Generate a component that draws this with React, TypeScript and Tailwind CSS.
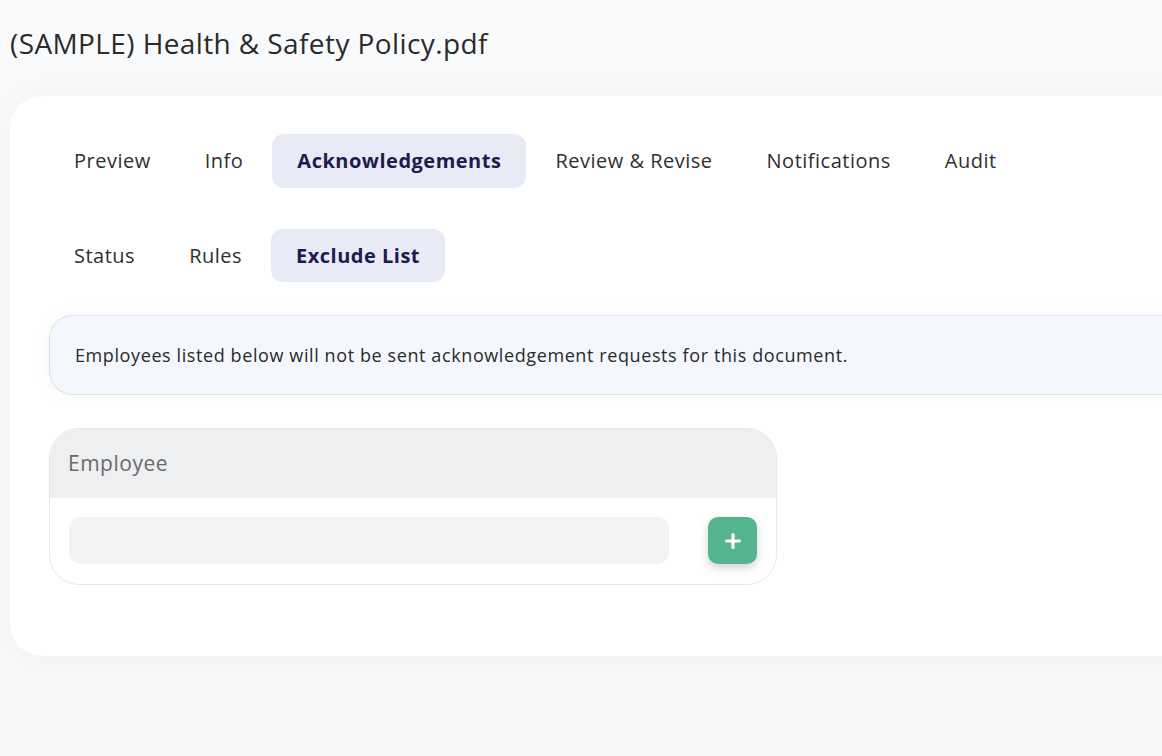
import { Plus } from 'lucide-react';

const mainTabs = ['Preview', 'Info', 'Acknowledgements', 'Review & Revise', 'Notifications', 'Audit'];
const subTabs = ['Status', 'Rules', 'Exclude List'];

const TabRow = ({ tabs, active, height }: { tabs: string[]; active: string; height: string }) => (
    <div className="flex items-center gap-1">
        {tabs.map(tab => (
            <button
                key={tab}
                type="button"
                className={`${height} px-[25px] rounded-[12px] text-[20px] tracking-[0.5px] whitespace-nowrap ${
                    tab === active ? 'bg-[#e8eaf6] text-[#1f1b4e] font-bold' : 'text-[#2f2f2f]'
                }`}
            >
                {tab}
            </button>
        ))}
    </div>
);

export default function App() {
    return (
        <div
            className="min-h-screen w-full overflow-hidden bg-gradient-to-b from-[#f9fafb] to-[#f7f8fa] pl-[10px] pt-[24px]"
            style={{ fontFamily: '"Open Sans", "Noto Sans", sans-serif' }}
        >
            <h1 className="text-[28px] leading-[38px] tracking-[0.4px] text-[#2b2b2b]">(SAMPLE) Health &amp; Safety Policy.pdf</h1>

            <div className="mt-[34px] w-[1200px] rounded-l-[32px] bg-white pl-[39px] pt-[38px] pb-[71px] shadow-[0_0_40px_rgba(0,0,0,0.04)]">
                <TabRow tabs={mainTabs} active="Acknowledgements" height="h-[54px]" />
                <div className="mt-[41px]">
                    <TabRow tabs={subTabs} active="Exclude List" height="h-[53px]" />
                </div>

                <div className="mt-[33px] flex h-[80px] items-center rounded-l-[24px] border border-r-0 border-[#dfe3e8] bg-[#f4f8fe] pl-[25px] text-[18px] tracking-[0.6px] text-[#2a2a2a] shadow-[0_0_20px_rgba(0,0,0,0.04)]">
                    Employees listed below will not be sent acknowledgement requests for this document.
                </div>

                <div className="mt-[33px] w-[728px] overflow-hidden rounded-[30px] border border-[#e8e8ea]">
                    <div className="flex h-[69px] items-center bg-[#eeeff1] pl-[18px] text-[21px] tracking-[0.5px] text-[#6a6a6a]">
                        Employee
                    </div>
                    <div className="flex items-center pl-[19px] pr-[19px] pt-[19px] pb-[20px]">
                        <div className="h-[47px] w-[600px] rounded-[12px] bg-[#f3f3f4]" />
                        <button
                            type="button"
                            className="ml-[39px] flex h-[47px] w-[49px] items-center justify-center rounded-[10px] bg-[#54b48d] text-white shadow-[0_4px_10px_rgba(0,0,0,0.18)]"
                        >
                            <Plus size={22} strokeWidth={3.5} />
                        </button>
                    </div>
                </div>
            </div>
        </div>
    );
}
